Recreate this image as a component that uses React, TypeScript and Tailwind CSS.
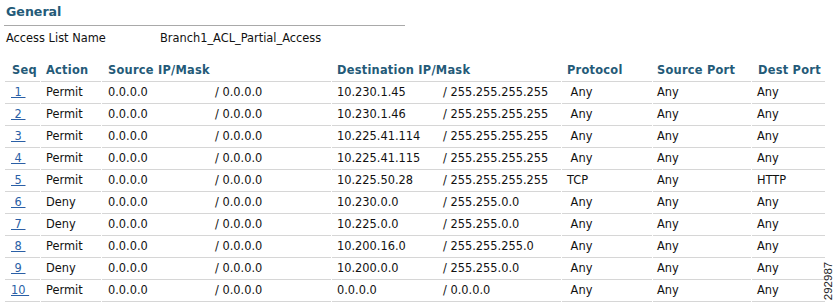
import React from "react";

type Row = {
  seq: string;
  action: string;
  src: string;
  srcMask: string;
  dst: string;
  dstMask: string;
  proto: string;
  sport: string;
  dport: string;
};

const rows: Row[] = [
  { seq: "1", action: "Permit", src: "0.0.0.0", srcMask: "0.0.0.0", dst: "10.230.1.45", dstMask: "255.255.255.255", proto: "Any", sport: "Any", dport: "Any" },
  { seq: "2", action: "Permit", src: "0.0.0.0", srcMask: "0.0.0.0", dst: "10.230.1.46", dstMask: "255.255.255.255", proto: "Any", sport: "Any", dport: "Any" },
  { seq: "3", action: "Permit", src: "0.0.0.0", srcMask: "0.0.0.0", dst: "10.225.41.114", dstMask: "255.255.255.255", proto: "Any", sport: "Any", dport: "Any" },
  { seq: "4", action: "Permit", src: "0.0.0.0", srcMask: "0.0.0.0", dst: "10.225.41.115", dstMask: "255.255.255.255", proto: "Any", sport: "Any", dport: "Any" },
  { seq: "5", action: "Permit", src: "0.0.0.0", srcMask: "0.0.0.0", dst: "10.225.50.28", dstMask: "255.255.255.255", proto: "TCP", sport: "Any", dport: "HTTP" },
  { seq: "6", action: "Deny", src: "0.0.0.0", srcMask: "0.0.0.0", dst: "10.230.0.0", dstMask: "255.255.0.0", proto: "Any", sport: "Any", dport: "Any" },
  { seq: "7", action: "Deny", src: "0.0.0.0", srcMask: "0.0.0.0", dst: "10.225.0.0", dstMask: "255.255.0.0", proto: "Any", sport: "Any", dport: "Any" },
  { seq: "8", action: "Permit", src: "0.0.0.0", srcMask: "0.0.0.0", dst: "10.200.16.0", dstMask: "255.255.255.0", proto: "Any", sport: "Any", dport: "Any" },
  { seq: "9", action: "Deny", src: "0.0.0.0", srcMask: "0.0.0.0", dst: "10.200.0.0", dstMask: "255.255.0.0", proto: "Any", sport: "Any", dport: "Any" },
  { seq: "10", action: "Permit", src: "0.0.0.0", srcMask: "0.0.0.0", dst: "0.0.0.0", dstMask: "0.0.0.0", proto: "Any", sport: "Any", dport: "Any" },
];

const cell = "h-[22px] leading-[21px] border-b border-[#d6d6d6] whitespace-nowrap";

export default function App() {
  return (
    <div
      className="relative w-[839px] h-[306px] overflow-hidden bg-white text-[11.4px] text-[#111]"
      style={{ fontFamily: '"DejaVu Sans", Verdana, sans-serif' }}
    >
      <div className="ml-[4px] w-[401px] h-[26px] border-b border-[#a9a9a9] pl-[2px] leading-[23px] text-[12.6px] font-bold text-[#245a78]">
        General
      </div>
      <div className="flex h-[24px] leading-[24px] pl-[6px]">
        <span className="w-[154px]">Access List Name</span>
        <span>Branch1_ACL_Partial_Access</span>
      </div>
      <div className="mt-[10px] pl-[5px]">
        <div className="flex gap-[1px] font-bold tracking-[0.25px] text-[#245a78]">
          <div className={`${cell} w-[35px] pl-[7px]`}>Seq</div>
          <div className={`${cell} w-[60px] pl-[5px]`}>Action</div>
          <div className={`${cell} w-[229px] pl-[6px]`}>Source IP/Mask</div>
          <div className={`${cell} w-[229px] pl-[5px]`}>Destination IP/Mask</div>
          <div className={`${cell} w-[90px] pl-[5px]`}>Protocol</div>
          <div className={`${cell} w-[98px] pl-[4px]`}>Source Port</div>
          <div className={`${cell} w-[73px] pl-[6px]`}>Dest Port</div>
        </div>
        {rows.map((r) => (
          <div key={r.seq} className="flex gap-[1px]">
            <div className={`${cell} w-[35px] pl-[6px]`}>
              <a href="#" className="text-[#2a5fa6] underline">
                {r.seq.length === 1 ? `\u00a0${r.seq}\u00a0` : `${r.seq}\u00a0`}
              </a>
            </div>
            <div className={`${cell} w-[60px] pl-[5px]`}>{r.action}</div>
            <div className={`${cell} w-[229px] pl-[6px]`}>
              <span className="inline-block w-[107px]">{r.src}</span>
              <span>/ {r.srcMask}</span>
            </div>
            <div className={`${cell} w-[229px] pl-[5px]`}>
              <span className="inline-block w-[106px]">{r.dst}</span>
              <span>/ {r.dstMask}</span>
            </div>
            <div className={`${cell} w-[90px] pl-[5px]`}>
              {r.proto === "Any" ? `\u00a0${r.proto}` : r.proto}
            </div>
            <div className={`${cell} w-[98px] pl-[4px]`}>{r.sport}</div>
            <div className={`${cell} w-[73px] pl-[5px]`}>{r.dport}</div>
          </div>
        ))}
      </div>
      <div
        className="absolute left-[829px] top-[281px] -translate-x-1/2 -translate-y-1/2 -rotate-90 text-[11.5px] leading-none text-[#222]"
        style={{ fontFamily: '"Liberation Sans", Arial, sans-serif' }}
      >
        292987
      </div>
    </div>
  );
}
